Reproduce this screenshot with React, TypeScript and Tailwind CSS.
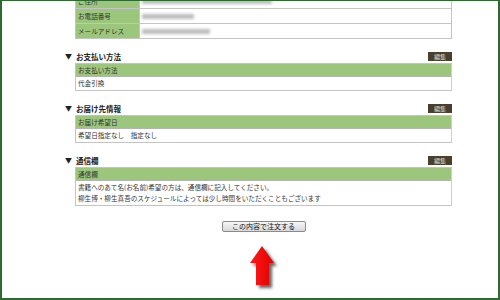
import React from "react";

const jp = { fontFamily: '"Noto Sans CJK JP", "Noto Sans", sans-serif' };

function EditBtn() {
  return (
    <div className="w-[24px] h-[9px] bg-[#4a3f2c] text-[#ece4cc] text-[6px] leading-[9px] text-center">
      編集
    </div>
  );
}

function Section({ title, head, lines }: { title: string; head: string; lines: string[] }) {
  return (
    <div className="mt-[13px]">
      <div className="flex items-center justify-between h-[9px] mb-[2px]">
        <div className="flex items-center text-[7.5px] font-bold text-[#222] leading-none">
          <span className="text-[7px] mr-[4px] ml-[1px]">▼</span>
          <span>{title}</span>
        </div>
        <EditBtn />
      </div>
      <div className="ml-[11px] w-[377px] border border-[#c4c4c4] border-r-[#cfcfcf]">
        <div className="h-[13px] bg-[#9cc67c] border-b border-[#b4b4b4] text-[6.6px] leading-[13px] text-[#333] pl-[2px]">
          {head}
        </div>
        <div className="bg-white text-[6.6px] text-[#333] pl-[2px] py-[1px] leading-[11px]">
          {lines.map((l, i) => (
            <div key={i}>{l}</div>
          ))}
        </div>
      </div>
    </div>
  );
}

export default function App() {
  const rows = [
    { label: "ご住所", blur: 130 },
    { label: "お電話番号", blur: 52 },
    { label: "メールアドレス", blur: 68 },
  ];
  return (
    <div
      style={jp}
      className="w-[500px] h-[300px] bg-white overflow-hidden border-[#2e6a30] border-l-2 border-t border-r-2 border-b-2"
    >
      <div className="ml-[62px] w-[388px] mt-[-8px]">
        <div className="ml-[11px] w-[377px] border-t border-x border-[#c4c4c4]">
          {rows.map((r) => (
            <div key={r.label} className="flex h-[15px] border-b border-[#c4c4c4]">
              <div className="w-[64px] bg-[#9cc67c] border-r border-[#c4c4c4] text-[6.6px] leading-[14px] text-[#333] pl-[2px]">
                {r.label}
              </div>
              <div className="flex-1 flex items-center pl-[2px]">
                <div
                  className="h-[5px] bg-[#a0a0a0] blur-[1.5px] opacity-70"
                  style={{ width: r.blur }}
                />
              </div>
            </div>
          ))}
        </div>

        <Section title="お支払い方法" head="お支払い方法" lines={["代金引換"]} />
        <Section title="お届け先情報" head="お届け希望日" lines={["希望日指定なし　指定なし"]} />
        <Section
          title="通信欄"
          head="通信欄"
          lines={[
            "書籍へのあて名(お名前)希望の方は、通信欄に記入してください。",
            "柳生博・柳生真吾のスケジュールによっては少し時間をいただくこともございます",
          ]}
        />

        <div className="ml-[11px] w-[377px] flex flex-col items-center">
          <div className="mt-[15px] w-[84px] h-[11px] rounded-[2px] border border-[#8a8a8a] bg-gradient-to-b from-[#f6f6f6] to-[#d8d8d8] text-[7px] leading-[9px] text-center text-[#111]">
            この内容で注文する
          </div>
          <svg width="34" height="46" viewBox="0 0 34 46" className="mt-[13px] ml-[1px]">
            <defs>
              <filter id="sh" x="-50%" y="-50%" width="200%" height="200%">
                <feGaussianBlur stdDeviation="1.5" />
              </filter>
              <linearGradient id="rg" x1="0" y1="0" x2="1" y2="0">
                <stop offset="0" stopColor="#ff1a1a" />
                <stop offset="1" stopColor="#e00000" />
              </linearGradient>
            </defs>
            <path
              d="M15 1 L27 18 L22 18 L22 40 L9 40 L9 18 L3 18 Z"
              transform="translate(3 3)"
              fill="#333"
              opacity="0.75"
              filter="url(#sh)"
            />
            <path d="M15 1 L27 18 L22 18 L22 40 L9 40 L9 18 L3 18 Z" fill="url(#rg)" />
          </svg>
        </div>
      </div>
    </div>
  );
}
